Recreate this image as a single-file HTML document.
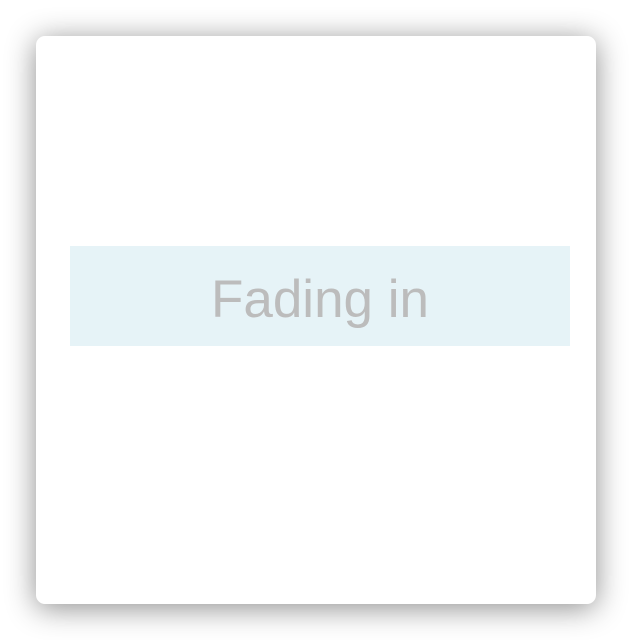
<!DOCTYPE html>
<html><head><style>
html,body{margin:0;padding:0;background:#fff;width:632px;height:640px;overflow:hidden}
.card{position:absolute;left:36px;top:36px;width:560px;height:568px;background:#fff;border-radius:9px;box-shadow:0 4px 30px rgba(0,0,0,0.45)}
.box{position:absolute;left:34px;top:210px;width:500px;height:100px;background:#e6f3f7}
.t{position:absolute;left:0;right:0;top:4px;text-align:center;line-height:100px;font-family:"Liberation Sans",sans-serif;font-size:53px;color:#bcbcbc}
</style></head><body>
<div class="card"><div class="box"><div class="t">Fading in</div></div></div>
</body></html>
